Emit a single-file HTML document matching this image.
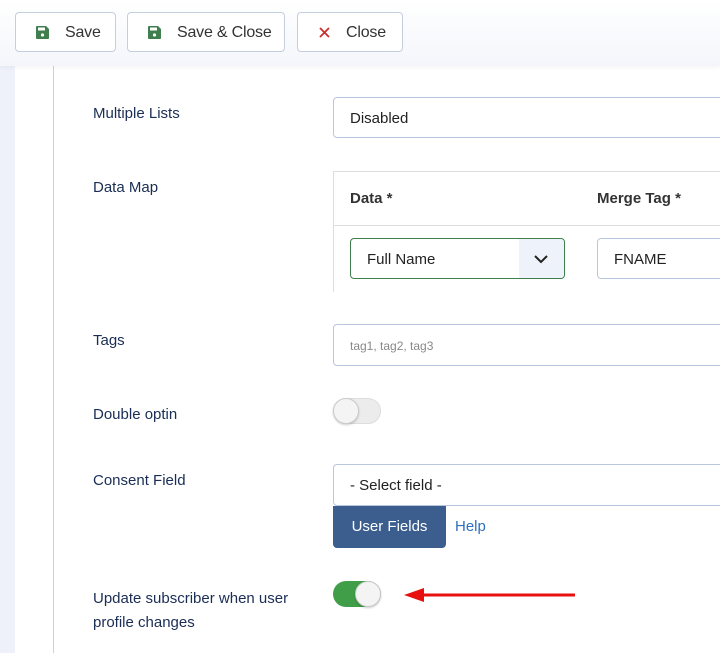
<!DOCTYPE html>
<html><head><style>
body{margin:0;width:720px;height:653px;overflow:hidden;background:#fff;font-family:"Liberation Sans",sans-serif;position:relative}
.a{position:absolute}
.tb{left:0;top:0;width:720px;height:66px;background:linear-gradient(#fff,#f4f6fb);box-shadow:0 2px 4px rgba(0,0,0,.04);z-index:2}
.btn{position:absolute;top:12px;height:38px;border:1px solid #c4cede;border-radius:4px;background:#fff;color:#333;font-size:16px;line-height:40px;box-sizing:content-box;letter-spacing:-0.2px}
.lbl{position:absolute;left:93px;color:#1a2d55;font-size:15px}
.inp{position:absolute;border:1px solid #b8c7dd;border-radius:4px;background:#fff;box-sizing:border-box;font-size:15px;color:#222;padding-left:16px}
.tog{position:absolute;width:48px;height:26px;border-radius:13px;box-sizing:border-box}
.knob{position:absolute;top:0;width:26px;height:26px;border-radius:13px;background:#f4f4f4;border:1px solid #ccc;box-sizing:border-box;box-shadow:0 1px 2px rgba(0,0,0,.2)}
</style></head><body>
<div class="a" style="left:0;top:66px;width:15px;height:587px;background:#eef1f9"></div>
<div class="a" style="left:53px;top:66px;width:1px;height:587px;background:#c9d2e3"></div>
<div class="a tb">
<div class="btn" style="left:15px;width:99px"><svg class="a" style="left:20px;top:13px" width="13" height="13" viewBox="0 0 13 13"><path d="M1 0h9l3 3v9a1 1 0 0 1-1 1H1a1 1 0 0 1-1-1V1a1 1 0 0 1 1-1z" fill="#3e7f4d"/><rect x="2" y="1.5" width="7" height="3" fill="#fff"/><circle cx="6.5" cy="9" r="1.6" fill="#fff"/></svg><span class="a" style="left:49px">Save</span></div>
<div class="btn" style="left:127px;width:156px"><svg class="a" style="left:20px;top:13px" width="13" height="13" viewBox="0 0 13 13"><path d="M1 0h9l3 3v9a1 1 0 0 1-1 1H1a1 1 0 0 1-1-1V1a1 1 0 0 1 1-1z" fill="#3e7f4d"/><rect x="2" y="1.5" width="7" height="3" fill="#fff"/><circle cx="6.5" cy="9" r="1.6" fill="#fff"/></svg><span class="a" style="left:49px">Save &amp; Close</span></div>
<div class="btn" style="left:297px;width:104px"><svg class="a" style="left:21px;top:14px" width="11" height="11" viewBox="0 0 11 11"><path d="M1 1l9 9M10 1l-9 9" stroke="#c8302b" stroke-width="1.8"/></svg><span class="a" style="left:48px">Close</span></div>
</div>
<div class="lbl" style="top:105px">Multiple Lists</div>
<div class="inp" style="left:333px;top:97px;width:400px;height:41px;line-height:41px">Disabled</div>
<div class="lbl" style="top:179px">Data Map</div>
<div class="a" style="left:333px;top:171px;width:400px;height:120px;border-left:1px solid #ddd;border-top:1px solid #ddd"></div>
<div class="a" style="left:334px;top:225px;width:400px;height:1px;background:#ddd"></div>
<div class="a" style="left:350px;top:190px;font-weight:bold;font-size:15px;color:#333">Data *</div>
<div class="a" style="left:597px;top:190px;font-weight:bold;font-size:15px;color:#333">Merge Tag *</div>
<div class="inp" style="left:350px;top:238px;width:215px;height:41px;line-height:41px;border-color:#3e7f4d">Full Name<div class="a" style="right:0;top:0;width:45px;height:39px;background:#eef3fb;border-radius:0 4px 4px 0"><svg class="a" style="left:15px;top:16px" width="14" height="9" viewBox="0 0 14 9"><path d="M1 1l6 6 6-6" stroke="#222" stroke-width="2" fill="none"/></svg></div></div>
<div class="inp" style="left:597px;top:238px;width:140px;height:41px;line-height:41px">FNAME</div>
<div class="lbl" style="top:332px">Tags</div>
<div class="inp" style="left:333px;top:324px;width:400px;height:42px;line-height:43px;font-size:12px;color:#888">tag1, tag2, tag3</div>
<div class="lbl" style="top:406px">Double optin</div>
<div class="tog" style="left:333px;top:398px;background:#ececec;border:1px solid #ddd"><div class="knob" style="left:-1px;top:-1px"></div></div>
<div class="lbl" style="top:472px">Consent Field</div>
<div class="inp" style="left:333px;top:464px;width:400px;height:42px;line-height:42px">- Select field -</div>
<div class="a" style="left:333px;top:506px;width:113px;height:42px;background:#3b5e8e;border-radius:0 0 4px 4px;color:#fff;font-size:15px;line-height:42px;text-align:center">User Fields</div>
<div class="a" style="left:455px;top:518px;color:#2f6fbf;font-size:15px">Help</div>
<div class="lbl" style="top:587px;line-height:24px">Update subscriber when user<br>profile changes</div>
<div class="tog" style="left:333px;top:581px;background:#3f9e47"><div class="knob" style="left:22px"></div></div>
<svg class="a" style="left:403px;top:587px" width="175" height="16" viewBox="0 0 175 16"><path d="M20 8H172" stroke="#e8100e" stroke-width="3"/><path d="M1 8L21 1V15z" fill="#e8100e"/></svg>
</body></html>
